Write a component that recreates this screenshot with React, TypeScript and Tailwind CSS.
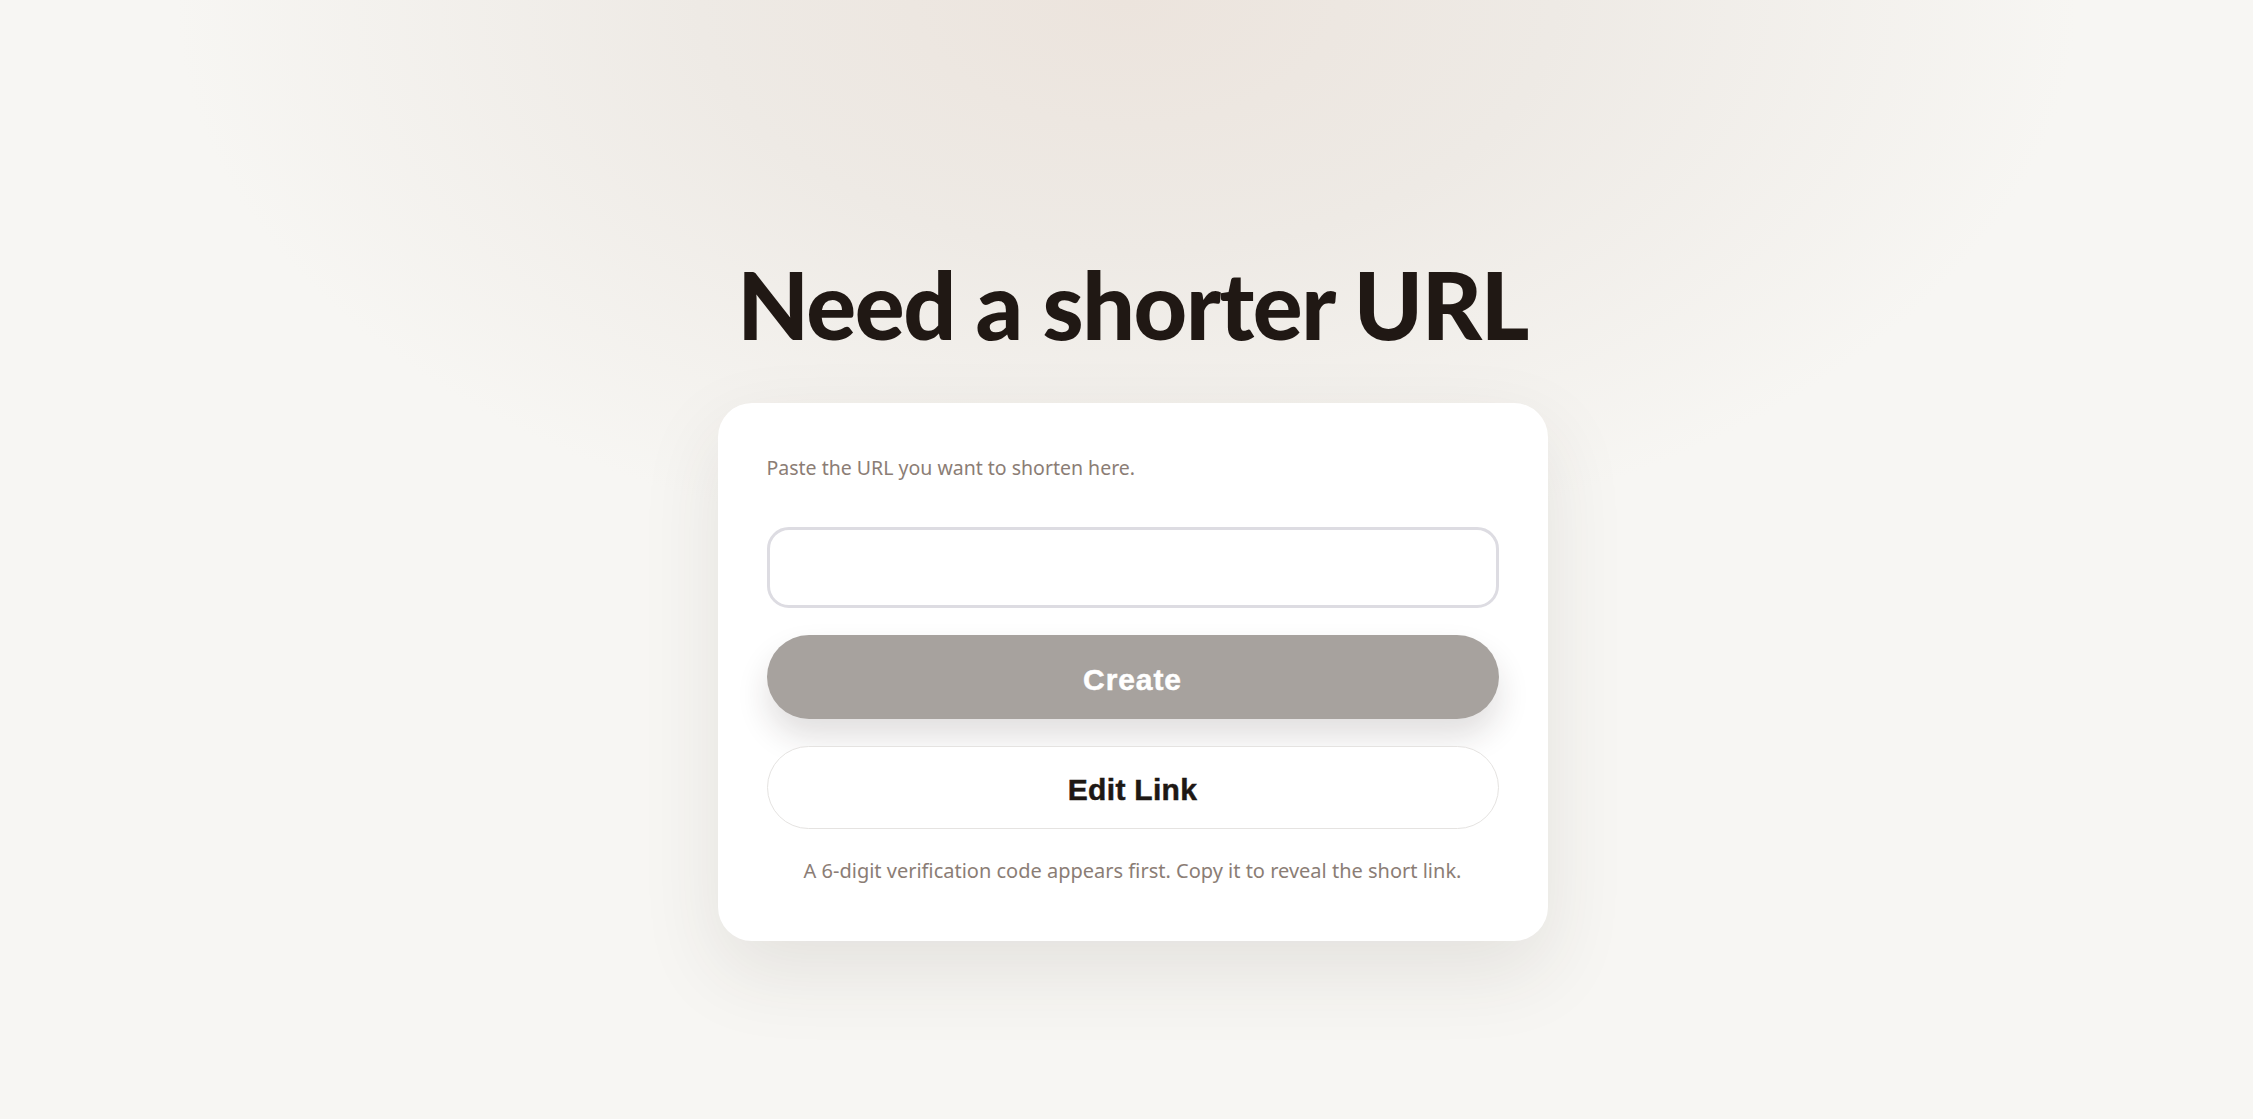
export default function App() {
  return (
    <div className="min-h-screen w-full bg-[#f7f6f3] bg-[radial-gradient(ellipse_950px_560px_at_50%_0%,#ece4dd_0%,#eeeae5_45%,#f7f6f3_100%)] font-['Noto_Sans',sans-serif]">
      <div className="flex flex-col items-center pt-[253px] pb-[120px] pl-[12px]">
        <h1 className="font-['Lato',sans-serif] text-[93px] leading-[1.1] font-black tracking-[-0.015em] text-[#201814]">
          Need a shorter URL
        </h1>
        <div className="mt-[48px] w-[830px] rounded-[34px] bg-white px-[49px] pt-[50px] pb-[55px] shadow-[0_30px_80px_rgba(60,45,35,0.10)]">
          <p className="text-[19.5px] leading-[30px] text-[#8b7d75]">
            Paste the URL you want to shorten here.
          </p>
          <input
            type="text"
            className="mt-[44px] block h-[81px] w-full rounded-[22px] border-[3px] border-[#dddce2] bg-white px-6 text-[22px] outline-none"
          />
          <button className="mt-[27px] flex h-[84px] w-full items-center justify-center rounded-full bg-[#a7a29e] pt-[4px] font-['Liberation_Sans',sans-serif] text-[30px] font-bold tracking-[0.03em] text-white shadow-[0_18px_32px_rgba(40,30,25,0.14)] [-webkit-text-stroke:0.5px_white]">
            Create
          </button>
          <button className="mt-[27px] flex h-[83px] w-full items-center justify-center rounded-full border border-[#e5e3e1] bg-white pt-[4px] font-['Liberation_Sans',sans-serif] text-[30px] font-bold tracking-[0.01em] text-[#1e1814] [-webkit-text-stroke:0.5px_#1e1814]">
            Edit Link
          </button>
          <p className="mt-[27px] text-center text-[20px] leading-[30px] text-[#8b7d75]">
            A 6-digit verification code appears first. Copy it to reveal the short link.
          </p>
        </div>
      </div>
    </div>
  );
}
